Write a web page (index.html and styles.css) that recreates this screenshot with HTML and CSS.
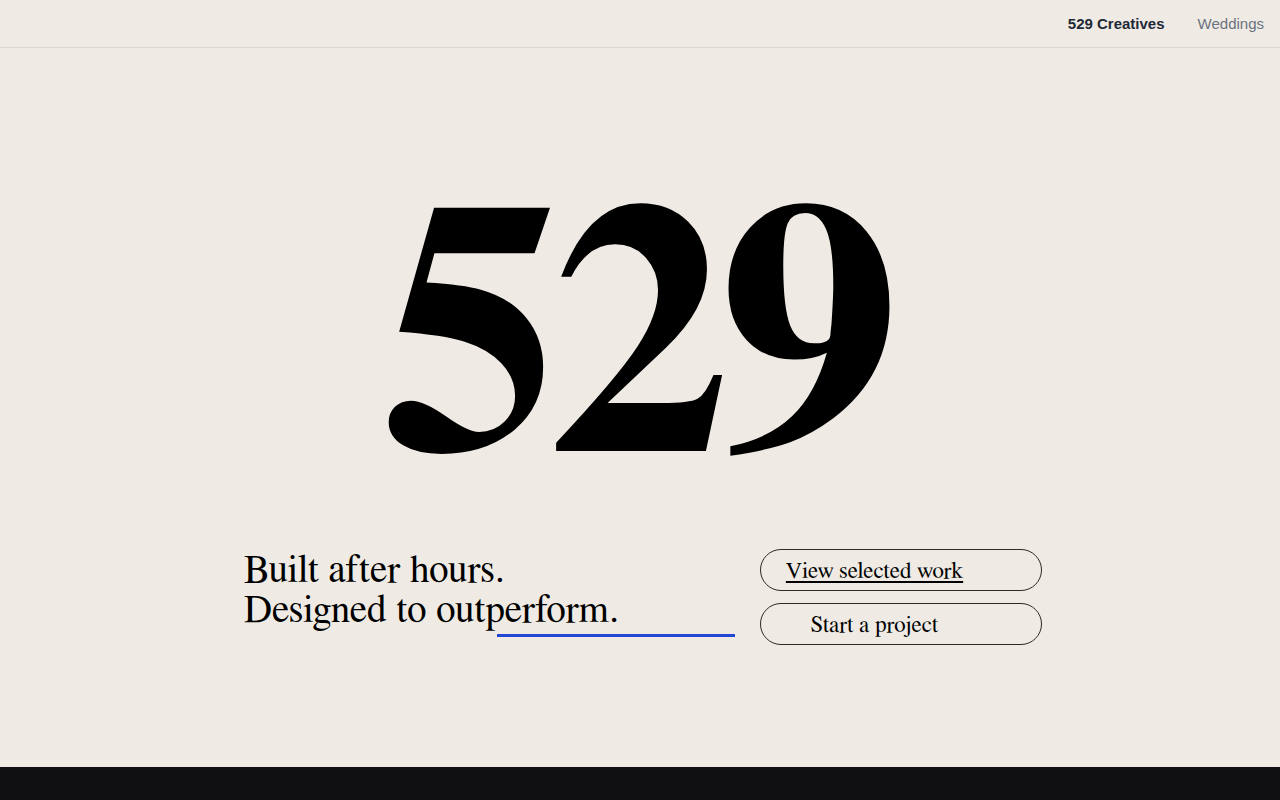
FILE: index.html
```html
<!DOCTYPE html>
<html lang="en">
<head>
<meta charset="utf-8">
<title>529 Creatives</title>
<link rel="stylesheet" href="styles.css">
</head>
<body>
<header class="topbar">
  <nav class="nav">
    <a class="nav-link nav-link--active" href="#">529 Creatives</a>
    <a class="nav-link" href="#">Weddings</a>
  </nav>
</header>
<main class="hero">
  <h1 class="hero-title">529</h1>
  <div class="hero-row">
    <p class="tagline">Built after hours.<br>Designed to outperform.<span class="tagline-bar"></span></p>
    <div class="actions">
      <a class="btn btn--link" href="#">View selected work</a>
      <a class="btn" href="#">Start a project</a>
    </div>
  </div>
</main>
<footer class="footer"></footer>
</body>
</html>
```

FILE: styles.css
```css
* { box-sizing: border-box; }
html, body { margin: 0; padding: 0; }
body {
  background: #efebe4;
  color: #000;
  font-family: "FreeSerif", "Liberation Serif", "Times New Roman", serif;
  height: 800px;
  overflow: hidden;
  display: flex;
  flex-direction: column;
}
.topbar {
  height: 48px;
  border-bottom: 1px solid #dcd8d0;
  display: flex;
  justify-content: flex-end;
  align-items: center;
  padding: 0 16px;
}
.nav {
  display: flex;
  gap: 33px;
  align-items: center;
}
.nav-link {
  font-family: "Liberation Sans", Arial, sans-serif;
  font-size: 15px;
  color: #6b7280;
  text-decoration: none;
}
.nav-link--active {
  color: #1f2937;
  font-weight: 700;
}
.hero {
  flex: 1;
  display: flex;
  flex-direction: column;
  align-items: center;
  padding-top: 115px;
}
.hero-title {
  margin: 0;
  font-size: 360px;
  line-height: 360px;
  font-weight: 700;
  letter-spacing: -0.03em;
  padding-right: 0.03em;
  height: 360px;
}
.hero-row {
  margin-top: 26px;
  width: 804px;
  display: flex;
  justify-content: space-between;
  align-items: flex-start;
  padding-left: 6px;
}
.tagline {
  position: relative;
  margin: 2px 0 0;
  font-size: 39px;
  line-height: 40px;
}
.tagline-bar {
  position: absolute;
  left: 253px;
  top: 83px;
  width: 238px;
  height: 3px;
  background: #2447d8;
}
.actions {
  display: flex;
  flex-direction: column;
  gap: 12px;
  width: 282px;
}
.btn {
  display: block;
  height: 42px;
  border: 1px solid #2a2a2a;
  border-radius: 999px;
  padding: 2px 77px 0 24px;
  text-align: center;
  font-size: 23px;
  line-height: 40px;
  color: #000;
  text-decoration: none;
  white-space: nowrap;
}
.btn--link { text-decoration: underline; text-underline-offset: 3px; }
.footer {
  height: 33px;
  background: #0f0f11;
}
```
